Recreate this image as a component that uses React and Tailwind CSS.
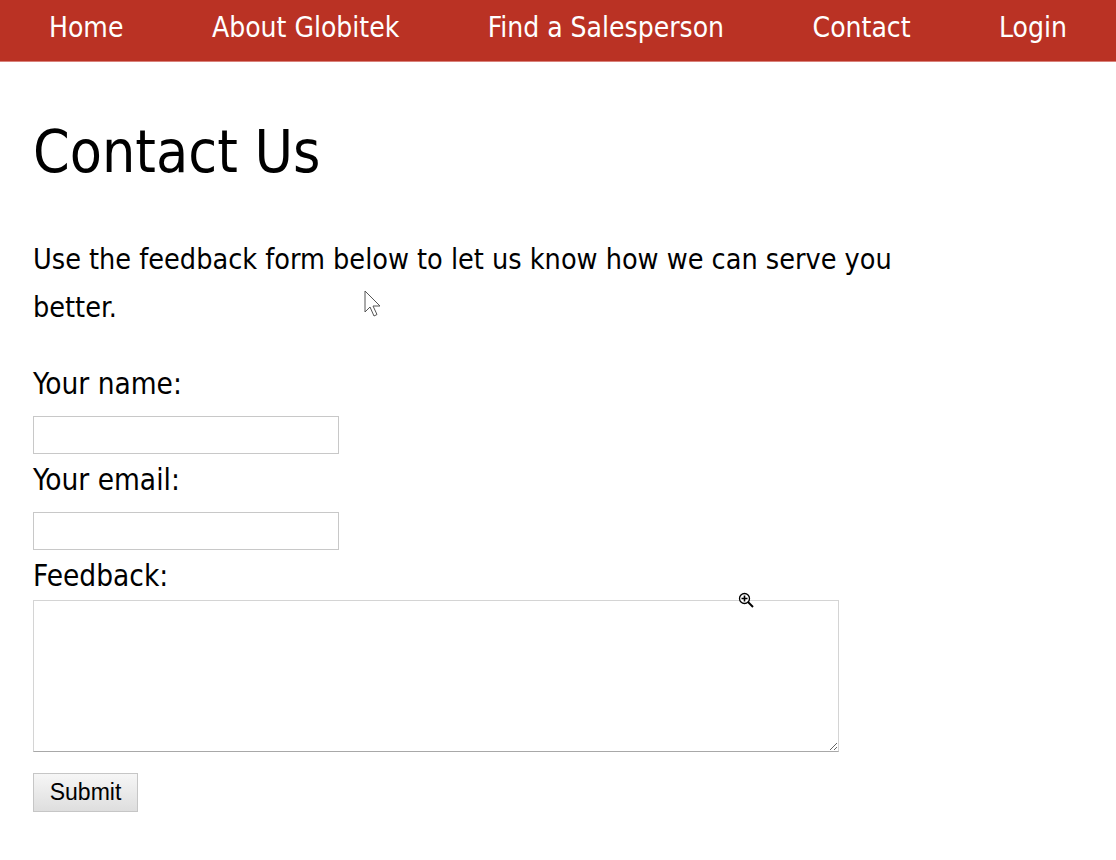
import React from "react";

export default function App() {
  const nav = ["Home", "About Globitek", "Find a Salesperson", "Contact", "Login"];
  return (
    <div className="relative min-h-[860px] w-[1116px] bg-white text-black font-['DejaVu_Sans_Condensed','DejaVu_Sans',sans-serif]">
      <nav className="flex h-[62px] items-center justify-between bg-[#ba3224] px-[49px] pb-[6px] border-b border-[#d9817a]">
        {nav.map((n) => (
          <a key={n} className="text-[28px] leading-none text-white">{n}</a>
        ))}
      </nav>
      <main className="px-[33px]">
        <h1 className="mt-[52px] text-[58.5px] leading-[76px] text-black">Contact Us</h1>
        <p className="mt-[46px] w-[900px] text-[28.5px] leading-[48px]">
          Use the feedback form below to let us know how we can serve you better.
        </p>
        <form className="mt-[28px] flex flex-col items-start">
          <label className="text-[29.5px] leading-[48px]">Your name:</label>
          <input type="text" className="mt-[8px] h-[38px] w-[306px] border border-[#c8c8c8] bg-white" />
          <label className="mt-[2px] text-[29.5px] leading-[48px]">Your email:</label>
          <input type="email" className="mt-[8px] h-[38px] w-[306px] border border-[#c8c8c8] bg-white" />
          <label className="mt-[2px] text-[29.5px] leading-[48px]">Feedback:</label>
          <textarea className="h-[152px] w-[806px] border border-[#d4d4d4] border-b-[#a8a8a8] bg-white resize" />
          <button type="button" className="mt-[21px] h-[39px] w-[105px] border border-[#c6c6c6] bg-gradient-to-b from-[#f6f6f6] to-[#dedede] text-[23px] leading-none text-black font-['Liberation_Sans',Arial,sans-serif]">
            Submit
          </button>
        </form>
      </main>
      <svg className="absolute left-[364px] top-[290px]" width="20" height="30" viewBox="0 0 20 30">
        <path d="M1 1 L1 22 L6 17 L10 26 L13 24.5 L9 16 L16 16 Z" fill="white" stroke="#555" strokeWidth="1" />
      </svg>
      <svg className="absolute left-[738px] top-[592px]" width="18" height="18" viewBox="0 0 18 18">
        <circle cx="6.5" cy="6.5" r="5" fill="white" stroke="black" strokeWidth="1.3" />
        <path d="M6.5 3.5 V9.5 M3.5 6.5 H9.5" stroke="black" strokeWidth="1.6" />
        <path d="M10 10 L15 15" stroke="black" strokeWidth="2" />
      </svg>
    </div>
  );
}
